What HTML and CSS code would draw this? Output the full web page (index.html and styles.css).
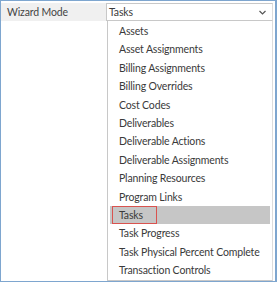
FILE: index.html
```html
<!DOCTYPE html>
<html lang="en">
<head>
  <meta charset="UTF-8" />
  <link rel="stylesheet" href="styles.css">
</head>
<body>
  <div class="frame">
    <div class="field-row">
      <div class="field-label">Wizard Mode</div>
      <div class="select-box">
        <span>Tasks</span>
        <svg class="chevron" width="7" height="5" viewBox="0 0 7 5"><path d="M0.5 1 L3.5 4 L6.5 1" fill="none" stroke="#555" stroke-width="1.2"/></svg>
      </div>
    </div>
    <div class="body-row">
      <div class="spacer"></div>
      <ul class="options">
        <li>Assets</li>
        <li>Asset Assignments</li>
        <li>Billing Assignments</li>
        <li>Billing Overrides</li>
        <li>Cost Codes</li>
        <li>Deliverables</li>
        <li>Deliverable Actions</li>
        <li>Deliverable Assignments</li>
        <li>Planning Resources</li>
        <li>Program Links</li>
        <li class="selected"><span class="focus">Tasks</span></li>
        <li>Task Progress</li>
        <li>Task Physical Percent Complete</li>
        <li>Transaction Controls</li>
      </ul>
    </div>
  </div>
</body>
</html>
```

FILE: styles.css
```css
body {
  margin: 0;
  font-family: 'Lato', 'Open Sans', sans-serif;
  font-size: 10.5px;
  letter-spacing: -0.15px;
  font-variant-ligatures: none;
  color: #3a3a3a;
  background: #fff;
}

.frame {
  width: 274px;
  height: 280px;
  border: 1px solid #7ea6cf;
  border-right-width: 2px;
  display: flex;
  flex-direction: column;
  overflow: hidden;
  white-space: nowrap;
}

.field-row {
  display: flex;
  margin-top: 2px;
  height: 18px;
}

.field-label {
  width: 99px;
  padding-left: 6px;
  background: #f0f0f0;
  line-height: 18px;
  color: #444;
}

.select-box {
  flex: 1;
  display: flex;
  align-items: center;
  justify-content: space-between;
  padding: 0 6px 0 2px;
  border: 1px solid #c8c8c8;
  border-right-color: #ddd;
  margin-right: 2px;
  background: #fff;
  box-sizing: border-box;
}

.chevron {
  margin-top: 1px;
}

.body-row {
  display: flex;
  flex: 1;
}

.spacer {
  width: 106px;
}

.options {
  list-style: none;
  margin: 0 2px 0 0;
  padding: 1px 2px 0 2px;
  flex: 1;
  border-left: 1px solid #c8c8c8;
  border-right: 1px solid #ddd;
  border-bottom: 1px solid #c8c8c8;
}

.options li {
  height: 18.4px;
  line-height: 18.4px;
  padding-left: 9px;
}

.options li.selected {
  background: #c6c6c6;
  padding-left: 2px;
}

.focus {
  display: inline-block;
  width: 37px;
  padding-left: 6px;
  height: 16.4px;
  line-height: 16.4px;
  border: 1px solid #d9534f;
  vertical-align: top;
}
```
